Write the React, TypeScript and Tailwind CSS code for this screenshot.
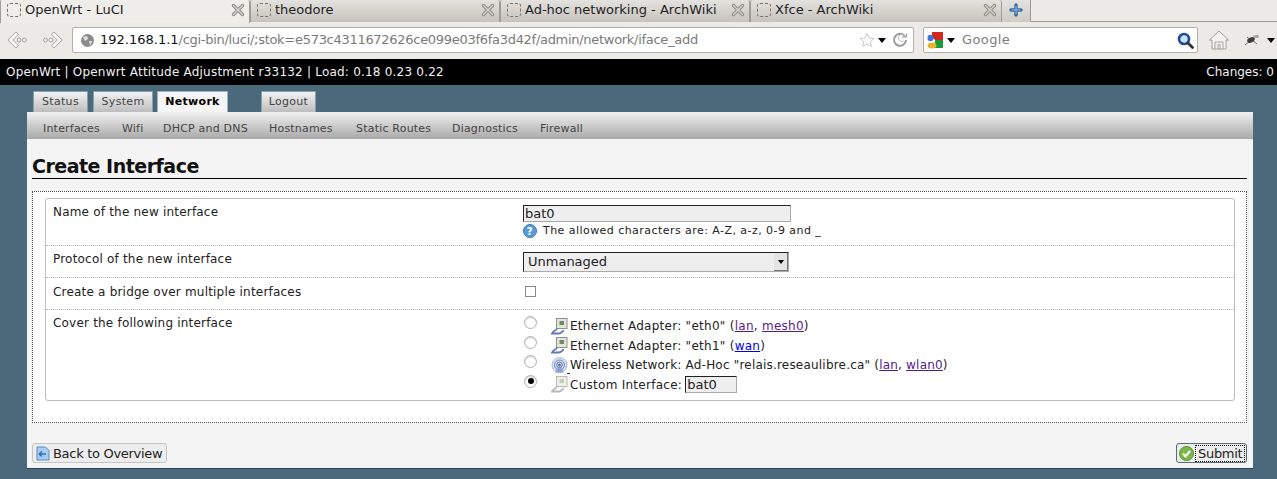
import React from 'react';

const Favicon = () => (
    <span className="w-[14px] h-[14px] shrink-0 rounded-[3px] border border-dashed border-[#77736c]" />
);

const CloseIcon = () => (
    <svg width="14" height="14" viewBox="0 0 14 14" className="shrink-0">
        <path d="M2.5 2.5 L11.5 11.5 M11.5 2.5 L2.5 11.5" stroke="#8f8c86" strokeWidth="3.4" strokeLinecap="round" />
        <path d="M2.5 2.5 L11.5 11.5 M11.5 2.5 L2.5 11.5" stroke="#dcd9d3" strokeWidth="1.2" strokeLinecap="round" />
    </svg>
);

interface BrowserTabProps {
    title: string;
    active?: boolean;
    widthClass: string;
}

const BrowserTab: React.FC<BrowserTabProps> = ({ title, active, widthClass }) => (
    <div className={`${widthClass} h-[22px] flex items-center pb-[3px] pl-[6px] pr-[4px] gap-[4px] border-r border-l border-[#a09c94] rounded-t-[2px] ${active ? 'bg-[#efedea] h-[23px]' : 'bg-gradient-to-b from-[#e4e2de] to-[#c6c3bd]'}`}>
        <Favicon />
        <span className="flex-1 truncate text-[13px] text-[#1e1e1e] leading-[16px]">{title}</span>
        <CloseIcon />
    </div>
);

const NavArrow = ({ flip }: { flip?: boolean }) => (
    <svg width="24" height="22" viewBox="0 0 24 22" className={`shrink-0 ${flip ? 'scale-x-[-1]' : ''}`}>
        <path d="M2 11 L10 3 L12.5 5.2 L6.8 11 L12.5 16.8 L10 19 Z" fill="#f8f7f5" stroke="#aaa7a1" />
        <circle cx="13" cy="11" r="2" fill="none" stroke="#a8a5a0" />
        <circle cx="18.5" cy="11" r="2" fill="none" stroke="#a8a5a0" />
    </svg>
);

const Caret = () => <span className="w-0 h-0 border-x-[4px] border-x-transparent border-t-[5px] border-t-black shrink-0" />;

const AdapterIcon = ({ muted }: { muted?: boolean }) => (
    <svg width="17" height="17" viewBox="0 0 17 17" className="shrink-0">
        <rect x="5.5" y="0.5" width="10.5" height="10" fill={muted ? '#efefe9' : '#e3e6da'} stroke={muted ? '#b9b9b2' : '#8d9186'} />
        <rect x="8.5" y="3" width="4.5" height="4" fill={muted ? '#c8cfc0' : '#75876a'} />
        <path d="M6 10.5 C5 13 2 12.5 1 15.5 H8 C10 15.5 11 13.5 13 12.5" fill="none" stroke={muted ? '#b4b8bd' : '#5f78b8'} strokeWidth="1.8" />
    </svg>
);

const WifiIcon = () => (
    <svg width="19" height="17" viewBox="0 0 19 17" className="shrink-0">
        <circle cx="8.5" cy="8" r="7.5" fill="#d8e0f2" stroke="#a9b8dc" />
        <circle cx="8.5" cy="8" r="5" fill="none" stroke="#6e86bd" />
        <circle cx="8.5" cy="8" r="2.8" fill="none" stroke="#5a73ad" />
        <circle cx="8.5" cy="8" r="1.2" fill="#39528f" />
        <path d="M8.5 8 L4 15.5 H13 Z" fill="#7f94c6" fillOpacity="0.75" />
        <path d="M16 16.5 H19" stroke="#333" strokeWidth="1" />
    </svg>
);

const Radio = ({ checked }: { checked?: boolean }) => (
    <span className="w-[13px] h-[13px] rounded-full border border-[#b0b0b0] bg-white shadow-[inset_0_1px_1px_#ccc] flex items-center justify-center shrink-0">
        {checked && <span className="w-[6px] h-[6px] rounded-full bg-black" />}
    </span>
);

const IfaceLink = ({ children, visited }: { children: React.ReactNode; visited?: boolean }) => (
    <a className={`underline ${visited ? 'text-[#551a8b]' : 'text-[#0000ee]'}`}>{children}</a>
);

interface IfaceRowProps {
    checked?: boolean;
    icon: React.ReactNode;
    children: React.ReactNode;
    heightClass?: string;
    trackingClass?: string;
}

const IfaceRow: React.FC<IfaceRowProps> = ({ checked, icon, children, heightClass = 'h-[20px]', trackingClass = 'tracking-[0.27px]' }) => (
    <div className={`flex items-center ${heightClass}`}>
        <span className="w-[28px] pl-[1px] -mt-[7px]"><Radio checked={checked} /></span>
        <span className="w-[19px] flex">{icon}</span>
        <span className={`flex items-center whitespace-pre ${trackingClass}`}>{children}</span>
    </div>
);

interface FormRowProps {
    label: string;
    children: React.ReactNode;
    className?: string;
    labelPadding?: string;
}

const FormRow: React.FC<FormRowProps> = ({ label, children, className, labelPadding = 'pt-[6px]' }) => (
    <div className={`flex border-b border-dotted border-[#b5b5b5] last:border-b-0 ${className}`}>
        <div className={`w-[477px] pl-[7px] ${labelPadding} text-[12px] tracking-[0.2px] leading-[15px] text-[#222]`}>{label}</div>
        <div className="flex-1">{children}</div>
    </div>
);

const SubTab = ({ children, className }: { children: string; className?: string }) => (
    <span className={`text-[11px] tracking-[0.2px] text-[#444] whitespace-nowrap ${className}`}>{children}</span>
);

const TopTab = ({ children, active, className }: { children: string; active?: boolean; className: string }) => (
    <div className={`h-[21px] flex items-center justify-center text-[11px] tracking-[0.3px] border-t border-x rounded-t-[1px] ${active ? 'bg-[#f5f5f5] border-[#9fb4bf] font-bold text-black' : 'bg-gradient-to-b from-[#f2f2f2] to-[#bdbdbd] border-[#8aa0ab] text-[#444]'} ${className}`}>
        {children}
    </div>
);

export default function App() {
    return (
        <div className="w-[1277px] h-[479px] overflow-hidden bg-[#4a6a7c] font-['DejaVu_Sans',sans-serif]">
            <div className="h-[59px] bg-[#eceae6]">
                <div className="h-[22px] flex items-start border-b border-[#a09c94]">
                    <BrowserTab title="OpenWrt - LuCI" active widthClass="w-[250px]" />
                    <BrowserTab title="theodore" widthClass="w-[250px]" />
                    <BrowserTab title="Ad-hoc networking - ArchWiki" widthClass="w-[250px]" />
                    <BrowserTab title="Xfce - ArchWiki" widthClass="w-[252px]" />
                    <div className="w-[29px] h-[22px] flex items-center justify-center pb-[2px] border-r border-[#a09c94] bg-gradient-to-b from-[#e4e2de] to-[#cfccc6]">
                        <svg width="14" height="14" viewBox="0 0 14 14">
                            <path d="M7 2 V12 M2 7 H12" stroke="#3f6fa8" strokeWidth="3.6" strokeLinecap="round" />
                            <path d="M7 3 V11 M3 7 H11" stroke="#8fb4dc" strokeWidth="1.2" />
                        </svg>
                    </div>
                </div>
                <div className="h-[36px] flex items-center pl-[6px]">
                    <NavArrow />
                    <span className="w-[10px] shrink-0" />
                    <NavArrow flip />
                    <div className="ml-[8px] w-[842px] h-[26px] shrink-0 flex items-center bg-white border border-[#b2aea6] rounded-[2px] pl-[7px] pr-[5px]">
                        <svg width="15" height="15" viewBox="0 0 15 15" className="shrink-0">
                            <circle cx="7.5" cy="7.5" r="6.5" fill="#8b8b8b" />
                            <path d="M3 4 L7 3 L8 6 L5 8 Z M9 8 L12.5 8 L10 12.5 Z" fill="#e2e2e2" />
                        </svg>
                        <span className="ml-[5px] flex-1 text-[13px] text-[#7a7a7a] truncate tracking-[-0.29px]"><span className="text-[#111] tracking-normal">192.168.1.1</span>/cgi-bin/luci/;stok=e573c4311672626ce099e03f6fa3d42f/admin/network/iface_add</span>
                        <svg width="16" height="16" viewBox="0 0 16 16" className="shrink-0">
                            <path d="M8 1.5 L10 6 L15 6.5 L11.2 9.7 L12.4 14.6 L8 12 L3.6 14.6 L4.8 9.7 L1 6.5 L6 6 Z" fill="#fff" stroke="#c9c9c9" />
                        </svg>
                        <span className="ml-[3px] flex"><Caret /></span>
                        <svg width="16" height="16" viewBox="0 0 16 16" className="ml-[6px] shrink-0">
                            <path d="M13 4.5 A6 6 0 1 0 14 8" fill="none" stroke="#9a9a9a" strokeWidth="2" />
                            <path d="M13 4.5 A3.5 3.5 0 1 0 11.5 9" fill="none" stroke="#bbb" strokeWidth="1" />
                            <path d="M10 5 H14.5 V1.5" fill="none" stroke="#9a9a9a" strokeWidth="1" />
                        </svg>
                    </div>
                    <div className="ml-[9px] w-[275px] h-[26px] shrink-0 flex items-center bg-white border border-[#b2aea6] rounded-[2px] pl-[3px] pr-[3px]">
                        <svg width="17" height="17" viewBox="0 0 17 17" className="shrink-0">
                            <path d="M5 0 H16 V9 H9 L5 5 Z" fill="#d4281f" />
                            <path d="M8 8 H16 V16 H8 Z" fill="#1d9a3a" />
                            <ellipse cx="3.5" cy="6" rx="3" ry="3.2" fill="#3a75d8" />
                            <ellipse cx="5" cy="13.5" rx="4.5" ry="3" fill="#e6b32e" />
                        </svg>
                        <span className="ml-[3px] flex"><Caret /></span>
                        <span className="ml-[7px] flex-1 text-[13px] tracking-[0.4px] text-[#7d7d7d]">Google</span>
                        <svg width="17" height="17" viewBox="0 0 17 17" className="shrink-0">
                            <circle cx="7" cy="7" r="5" fill="#cfe0f5" stroke="#1f4c96" strokeWidth="2.6" />
                            <path d="M11 11 L15.5 15.5" stroke="#333" strokeWidth="2.8" strokeLinecap="round" />
                        </svg>
                    </div>
                    <svg width="22" height="22" viewBox="0 0 22 22" className="ml-[10px] shrink-0">
                        <path d="M1.5 11 L11 2 L20.5 11 H18 V20 H4 V11 Z" fill="#f4f3f0" stroke="#a4a19b" />
                        <path d="M7 20 V13 H15 V20 M10 20 V15.5 H12 V20" fill="none" stroke="#a4a19b" />
                    </svg>
                    <svg width="18" height="14" viewBox="0 0 18 14" className="ml-[13px] shrink-0">
                        <path d="M2 12 L8 7 L4 4 M9 7 L15 2 M9 7 L14 11" stroke="#77756f" strokeWidth="1" fill="none" />
                        <ellipse cx="8" cy="7" rx="4" ry="2.4" fill="#3c3c3a" transform="rotate(-25 8 7)" />
                        <ellipse cx="13" cy="3.5" rx="3" ry="1.6" fill="#aaa" />
                    </svg>
                    <span className="ml-[6px] flex"><Caret /></span>
                </div>
            </div>

            <div className="h-[26px] bg-black flex items-center justify-between pl-[6px] pr-[3px] text-[12px] text-[#f2f2f2]">
                <span className="tracking-[0.21px]">OpenWrt | Openwrt Attitude Adjustment r33132 | Load: 0.18 0.23 0.22</span>
                <span>Changes: 0</span>
            </div>

            <div className="flex items-end h-[27px] pl-[33px]">
                <TopTab className="w-[55px]">Status</TopTab>
                <TopTab className="w-[60px] ml-[5px]">System</TopTab>
                <TopTab active className="w-[71px] ml-[4px]">Network</TopTab>
                <TopTab className="w-[55px] ml-[33px]">Logout</TopTab>
            </div>

            <div className="ml-[27px] w-[1226px] h-[357px] bg-[#f4f4f4] border-b border-[#2f3f4a]">
                <div className="h-[27px] flex items-center pt-[8px] pl-[16px] gap-[22px] bg-gradient-to-b from-[#f1f1f1] to-[#a9a9a9]">
                    <SubTab className="w-[57px]">Interfaces</SubTab>
                    <SubTab className="w-[19px]">Wifi</SubTab>
                    <SubTab className="w-[84px]">DHCP and DNS</SubTab>
                    <SubTab className="w-[65px]">Hostnames</SubTab>
                    <SubTab className="w-[74px]">Static Routes</SubTab>
                    <SubTab className="w-[66px]">Diagnostics</SubTab>
                    <SubTab className="w-[42px]">Firewall</SubTab>
                </div>

                <div className="pl-[5px] pr-[6px]">
                    <h2 className="mt-[16px] h-[24px] border-b border-black text-[19px] leading-[22px] font-bold text-[#111] whitespace-nowrap tracking-[-0.5px]">Create Interface</h2>

                    <div className="mt-[12px] h-[232px] border border-dotted border-[#555] bg-white pt-[6px] pl-[12px] pr-[11px]">
                        <div className="h-[203px] border border-[#bdbdbd] rounded-[3px] flex flex-col">
                            <FormRow label="Name of the new interface" className="h-[47px]">
                                <div className="pt-[6px]">
                                    <div className="w-[268px] h-[17px] bg-[#eeeeee] border border-[#aaa] border-t-[#222] border-l-[#222] text-[13px] leading-[15px] pl-[1px] text-[#222]">bat0</div>
                                    <div className="flex items-center mt-[1px] h-[16px] text-[11px] tracking-[0.45px] text-[#222]">
                                        <svg width="14" height="14" viewBox="0 0 14 14" className="mr-[6px]">
                                            <circle cx="7" cy="7" r="6.5" fill="#5b9bd8" stroke="#3f77b0" />
                                            <text x="7" y="10.5" textAnchor="middle" fontSize="10" fontWeight="bold" fill="#fff">?</text>
                                        </svg>
                                        The allowed characters are: A-Z, a-z, 0-9 and _
                                    </div>
                                </div>
                            </FormRow>
                            <FormRow label="Protocol of the new interface" className="h-[32px]">
                                <div className="pt-[6px]">
                                    <div className="w-[266px] h-[20px] bg-[#eeeeee] border border-[#aaa] border-t-[#222] border-l-[#222] flex items-center justify-between text-[13px] pl-[4px] text-[#222]">
                                        Unmanaged
                                        <span className="w-[14px] h-[18px] bg-[#e4e4e4] border-r border-b border-[#777] flex items-center justify-center">
                                            <span className="w-0 h-0 border-x-[3px] border-x-transparent border-t-[4px] border-t-black" />
                                        </span>
                                    </div>
                                </div>
                            </FormRow>
                            <FormRow label="Create a bridge over multiple interfaces" className="h-[32px]" labelPadding="pt-[7px]">
                                <div className="pt-[8px] pl-[2px]">
                                    <span className="block w-[11px] h-[11px] border border-[#888] bg-white" />
                                </div>
                            </FormRow>
                            <FormRow label="Cover the following interface" className="flex-1">
                                <div className="pt-[6px] text-[12px] text-[#222]">
                                    <IfaceRow icon={<AdapterIcon />}>Ethernet Adapter: "eth0" (<IfaceLink visited>lan</IfaceLink>, <IfaceLink visited>mesh0</IfaceLink>)</IfaceRow>
                                    <IfaceRow icon={<AdapterIcon />} heightClass="h-[19px]">Ethernet Adapter: "eth1" (<IfaceLink>wan</IfaceLink>)</IfaceRow>
                                    <IfaceRow icon={<WifiIcon />} trackingClass="tracking-[0.2px]">Wireless Network: Ad-Hoc "relais.reseaulibre.ca" (<IfaceLink visited>lan</IfaceLink>, <IfaceLink visited>wlan0</IfaceLink>)</IfaceRow>
                                    <IfaceRow checked icon={<AdapterIcon muted />} heightClass="h-[19px]">Custom Interface: <span className="inline-block w-[52px] h-[17px] -ml-[1px] bg-[#eeeeee] border border-[#aaa] border-t-[#222] border-l-[#222] text-[13px] leading-[15px] pl-[1px] tracking-normal">bat0</span></IfaceRow>
                                </div>
                            </FormRow>
                        </div>
                    </div>

                    <div className="mt-[20px] flex justify-between">
                        <div className="h-[20px] w-[135px] flex items-center whitespace-nowrap bg-[#ededed] border border-[#c4c4c4] rounded-[3px] pl-[3px] pt-[1px] text-[13px] tracking-[-0.3px] text-[#222]">
                            <svg width="14" height="15" viewBox="0 0 14 15" className="mr-[3px] shrink-0 -mt-[1px]">
                                <path d="M1 1 H9.5 L13 4.5 V14 H1 Z" fill="#a9cdf2" stroke="#5b8cc0" />
                                <path d="M3 8 H10 M3 8 L6 5.5 M3 8 L6 10.5" stroke="#2f6fb5" strokeWidth="1.6" fill="none" />
                            </svg>
                            Back to Overview
                        </div>
                        <div className="h-[20px] w-[71px] flex items-center bg-[#ededed] border border-[#5c6b78] rounded-[3px] pl-[2px] text-[13px] tracking-[-0.3px] text-[#222]">
                            <svg width="15" height="15" viewBox="0 0 15 15" className="mr-[1px] shrink-0">
                                <circle cx="7.5" cy="7.5" r="7" fill="#7ab648" stroke="#5c8f36" />
                                <path d="M4 7.5 L6.5 10.5 L11 5" stroke="#fff" strokeWidth="2" fill="none" />
                            </svg>
                            <span className="px-[2px] border border-dotted border-black leading-[15px]">Submit</span>
                        </div>
                    </div>
                </div>
            </div>
        </div>
    );
}
